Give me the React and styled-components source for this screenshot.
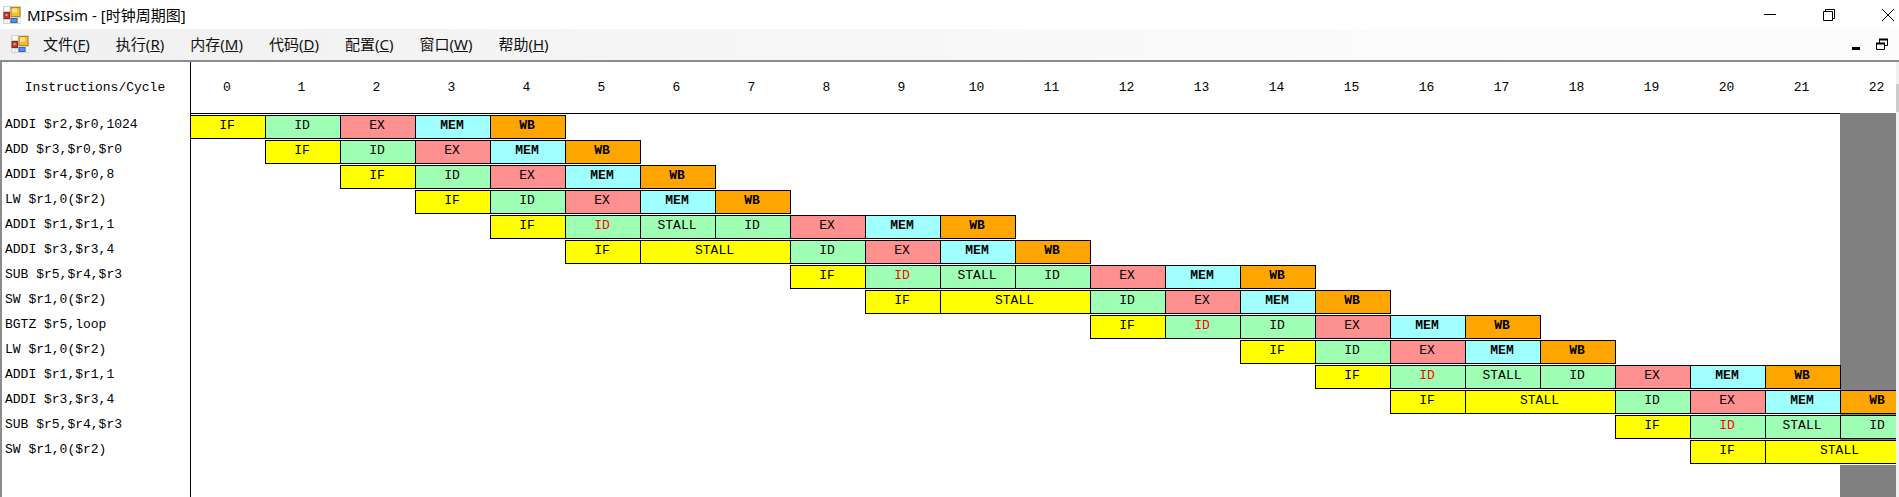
import React from "react";
import styled, { createGlobalStyle } from "styled-components";

const Global = createGlobalStyle`
  *, *::before, *::after { box-sizing: border-box; }
  body { margin: 0; background: #fff; color: #000; overflow-x: hidden; }
`;

const ui = `"Noto Sans", "Open Sans", "Noto Sans CJK SC", sans-serif`;
const mono = `"Liberation Mono", "Noto Sans CJK SC", monospace`;

const Window = styled.div`
  display: flex;
  flex-direction: column;
  min-height: 100vh;
`;

const TitleBar = styled.header`
  display: flex;
  align-items: center;
  justify-content: space-between;
  height: 29px;
  padding-left: 3px;
`;

const Title = styled.h1`
  display: flex;
  align-items: center;
  gap: 6px;
  margin: 0;
  font: 400 15px/26px ${ui};
`;

const Buttons = styled.div`
  display: flex;
  align-items: center;
  gap: ${(p) => p.$gap}px;
  padding-right: ${(p) => p.$end}px;
`;

const IconButton = styled.button`
  display: flex;
  padding: 0;
  border: 0;
  background: none;
`;

const MenuBar = styled.nav`
  display: flex;
  align-items: center;
  justify-content: space-between;
  height: 31px;
  padding: 0 0 2px 11px;
  background: linear-gradient(90deg, #f0f0f0, #fcfcfc 80%);
`;

const Menus = styled.div`
  display: flex;
  align-items: center;
`;

const MenuList = styled.div`
  display: flex;
  gap: 26px;
  margin-left: 14px;
`;

const MenuButton = styled.button`
  padding: 0;
  border: 0;
  background: none;
  color: #111;
  font: 400 15px/28px ${ui};
  white-space: nowrap;
`;

const Client = styled.main`
  display: flex;
  flex: 1;
  border-top: 2px solid #8c8c8c;
  border-left: 2px solid #8c8c8c;
`;

const Viewport = styled.div`
  display: flex;
  flex: 1;
  min-width: 0;
  overflow: hidden;
`;

const Track = styled.div`
  width: 3px;
  padding-top: 22px;
  background: #f0f0f0;
`;

const Thumb = styled.div`
  height: 28px;
  background: #cdcdcd;
`;

const Chart = styled.table`
  flex: none;
  width: 1913px;
  table-layout: fixed;
  border-collapse: separate;
  border-spacing: 0;
  font: 400 13px/20px ${mono};
`;

const LabelCol = styled.col`
  width: 188px;
`;

const CurrentCol = styled.col`
  width: 75px;
  background: #808080;
`;

const HeadCell = styled.th`
  height: 53px;
  padding: 0 2px 2px 0;
  background: #fff;
  font-weight: 400;
  box-shadow: ${(p) => ({
    rule: "inset 0 -1px #fff, inset 0 -2px #000",
    current: "inset 0 -2px #808080",
  })[p.$edge] || "none"};
  border-left: ${(p) => (p.$first ? "1px solid #000" : "0")};
`;

const LabelCell = styled.th`
  height: 25px;
  padding: 0 3px;
  font-weight: 400;
  text-align: left;
  vertical-align: top;
  white-space: nowrap;
`;

const Cell = styled.td`
  padding: 0;
  vertical-align: top;
  box-shadow: ${(p) => (p.$axis ? "inset 1px 0 #000" : "none")};
`;

const colors = {
  IF: "#ffff00",
  ID: "#9fffb4",
  EX: "#ff9090",
  MEM: "#a0ffff",
  WB: "#ffa500",
};

const Stage = styled.div`
  width: calc(100% + 1px);
  height: 24px;
  position: relative;
  padding-right: 2px;
  border: 1px solid #000;
  background: ${(p) => colors[p.$kind]};
  color: ${(p) => (p.$hazard ? "#f00" : "#000")};
  font-weight: ${(p) => (p.$heavy ? 700 : 400)};
  line-height: 19px;
  text-align: center;
`;

const AppIcon = () => (
  <svg width="18" height="18" viewBox="0 0 18 18" aria-hidden="true">
    <rect width="18" height="18" fill="#d3d3d3" />
    <rect x="1.500" y="1" width="5" height="4" fill="#fff" />
    <rect x="1" y="6.500" width="5.500" height="6" fill="#c43a34" stroke="#98211f" />
    <rect x="2.500" y="8" width="2" height="2" fill="#f09a90" />
    <rect x="8" y="1.500" width="9" height="9" fill="#f4bd32" stroke="#b98716" />
    <rect x="9" y="2.500" width="5" height="4" fill="#ffe18a" />
    <rect x="8" y="12.500" width="6" height="4" fill="#4f93ee" stroke="#2d66c4" />
    <path d="M1.500 14h2v3h-2zM4.500 14h2v3h-2zM15.500 12h2v5h-2z" fill="#fff" />
  </svg>
);

const menus = [
  ["文件", "F"],
  ["执行", "R"],
  ["内存", "M"],
  ["代码", "D"],
  ["配置", "C"],
  ["窗口", "W"],
  ["帮助", "H"],
];

const LAST_CYCLE = 22;

// Each stage reads "NAME", "NAME!" for a hazard, or "STALL:kind:span".
const rows = [
  ["ADDI $r2,$r0,1024", 0, "IF ID EX MEM WB"],
  ["ADD $r3,$r0,$r0", 1, "IF ID EX MEM WB"],
  ["ADDI $r4,$r0,8", 2, "IF ID EX MEM WB"],
  ["LW $r1,0($r2)", 3, "IF ID EX MEM WB"],
  ["ADDI $r1,$r1,1", 4, "IF ID! STALL:ID:1 ID EX MEM WB"],
  ["ADDI $r3,$r3,4", 5, "IF STALL:IF:2 ID EX MEM WB"],
  ["SUB $r5,$r4,$r3", 8, "IF ID! STALL:ID:1 ID EX MEM WB"],
  ["SW $r1,0($r2)", 9, "IF STALL:IF:2 ID EX MEM WB"],
  ["BGTZ $r5,loop", 12, "IF ID! ID EX MEM WB"],
  ["LW $r1,0($r2)", 14, "IF ID EX MEM WB"],
  ["ADDI $r1,$r1,1", 15, "IF ID! STALL:ID:1 ID EX MEM WB"],
  ["ADDI $r3,$r3,4", 16, "IF STALL:IF:2 ID EX MEM WB"],
  ["SUB $r5,$r4,$r3", 19, "IF ID! STALL:ID:1 ID"],
  ["SW $r1,0($r2)", 20, "IF STALL:IF:2"],
];

function parse(text) {
  return text.split(" ").map((part) => {
    const [raw, kind, span] = part.split(":");
    const name = raw.replace("!", "");
    return { name, kind: kind || name, span: Number(span || 1), hazard: raw.endsWith("!") };
  });
}

function InstructionRow({ label, start, stages }) {
  let cycle = start;
  const cells = stages.map((s) => {
    const key = cycle;
    cycle += s.span;
    return (
      <Cell key={key} colSpan={s.span} $axis={key === 0}>
        <Stage $kind={s.kind} $hazard={s.hazard} $heavy={s.name === "MEM" || s.name === "WB"}>
          {s.name}
        </Stage>
      </Cell>
    );
  });
  const after = LAST_CYCLE - cycle;
  return (
    <tr>
      <LabelCell scope="row">{label}</LabelCell>
      {start > 0 && <Cell $axis colSpan={start} />}
      {cells}
      {after > 0 && <Cell colSpan={after} />}
      {cycle <= LAST_CYCLE && <Cell />}
    </tr>
  );
}

const cycles = Array.from({ length: LAST_CYCLE + 1 }, (_, i) => i);

export default function App() {
  return (
    <Window>
      <Global />
      <TitleBar>
        <Title>
          <AppIcon />
          MIPSsim - [时钟周期图]
        </Title>
        <Buttons $gap={47} $end={5}>
          <IconButton aria-label="Minimize">
            <svg width="12" height="12" viewBox="0 0 12 12"><path d="M0 5.500h12" stroke="#000" /></svg>
          </IconButton>
          <IconButton aria-label="Restore">
            <svg width="12" height="12" viewBox="0 0 12 12" fill="none" stroke="#000">
              <path d="M.5 2.500h9v9h-9zM2.500 2.500v-2h9v9h-2" />
            </svg>
          </IconButton>
          <IconButton aria-label="Close">
            <svg width="12" height="12" viewBox="0 0 12 12"><path d="M0 0l12 12M12 0L0 12" stroke="#000" /></svg>
          </IconButton>
        </Buttons>
      </TitleBar>
      <MenuBar>
        <Menus>
          <AppIcon />
          <MenuList>
            {menus.map(([name, key]) => (
              <MenuButton key={key}>
                {name}(<u>{key}</u>)
              </MenuButton>
            ))}
          </MenuList>
        </Menus>
        <Buttons $gap={16} $end={11}>
          <IconButton aria-label="Minimize chart">
            <svg width="8" height="12" viewBox="0 0 8 12"><path d="M0 9h8v3H0z" /></svg>
          </IconButton>
          <IconButton aria-label="Restore chart">
            <svg width="12" height="12" viewBox="0 0 12 12" fill="none" stroke="#000">
              <path d="M.5 5.500h8v6h-8zM3.500 5V1.500h8v6H9" />
              <path d="M0 5.500h9M3 1.500h9" strokeWidth="2" />
            </svg>
          </IconButton>
        </Buttons>
      </MenuBar>
      <Client>
        <Viewport>
          <Chart>
            <colgroup>
              <LabelCol />
              <col span={LAST_CYCLE} />
              <CurrentCol />
            </colgroup>
            <thead>
              <tr>
                <HeadCell scope="col">Instructions/Cycle</HeadCell>
                {cycles.map((c) => (
                  <HeadCell
                    key={c}
                    scope="col"
                    $first={c === 0}
                    $edge={c < LAST_CYCLE ? "rule" : "current"}
                  >
                    {c}
                  </HeadCell>
                ))}
              </tr>
            </thead>
            <tbody>
              {rows.map(([label, start, text], i) => (
                <InstructionRow key={i} label={label} start={start} stages={parse(text)} />
              ))}
              <tr>
                <Cell />
                <Cell $axis colSpan={LAST_CYCLE} />
                <Cell />
              </tr>
            </tbody>
          </Chart>
        </Viewport>
        <Track>
          <Thumb />
        </Track>
      </Client>
    </Window>
  );
}
